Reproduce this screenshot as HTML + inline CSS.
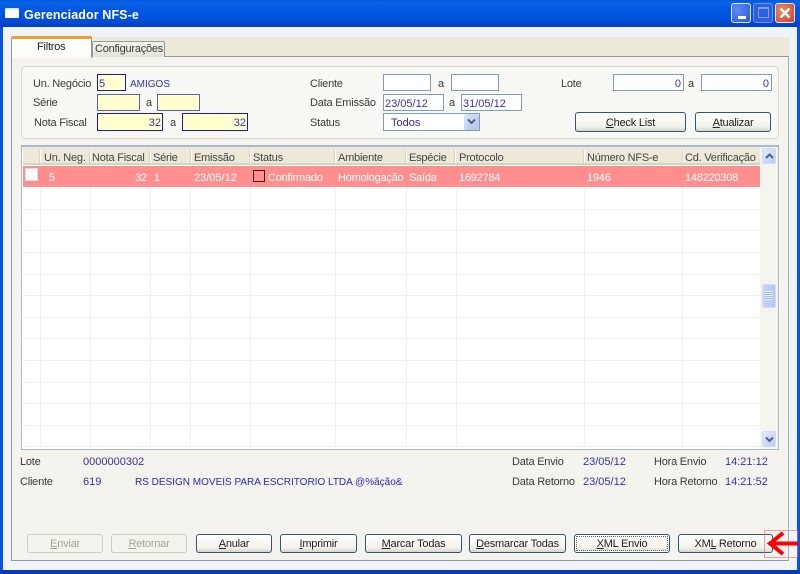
<!DOCTYPE html>
<html><head><meta charset="utf-8"><style>
*{box-sizing:border-box}
html,body{margin:0;padding:0;width:800px;height:574px;overflow:hidden;background:#f1f3fa}
body{position:relative;font:11px/13px "Liberation Sans",sans-serif;letter-spacing:-.22px;color:#333;filter:blur(.35px)}
div,span.a{position:absolute}
.t{white-space:nowrap;height:13px;color:#3a3a3a;margin-top:1px}
.n{letter-spacing:0}
.b{color:#3434a8}
.h{color:#444;top:151px}
.r{color:#fff;top:171px}
.i{background:#ffffcf;border:1px solid #5f5fb0;color:#3434b4;padding:0 1px;line-height:18px;letter-spacing:0;white-space:nowrap}
.d{border-color:#1c1c9c}
.w{background:#fff;border:1px solid #7f9db9;color:#3434b4;padding:0 2px;line-height:18px;letter-spacing:0}
.ra{text-align:right}
.btn{top:534px;height:19px;border:1px solid #30567f;border-radius:3px;background:linear-gradient(#fff,#f3f2ea 75%,#d8d5c6);text-align:center;line-height:19px;color:#222;white-space:nowrap}
.off{border-color:#cfcdbd;background:#f4f3ee;color:#a5a498}
.v{width:1px;background:#f2f0e6;top:166px;height:281px}
.l{height:1px;background:#f2f0e6;left:23px;width:737px}
.hs{background:#fff;border-left:1px solid #d5d2c0;width:2px;top:150px;height:13px}
.sb{left:762px;width:14px;height:16px;border:1px solid #d3dcf3;border-radius:2px;background:linear-gradient(135deg,#e3eafd,#bccbf5)}
.wb{top:3px;width:20px;height:20px;border:1px solid #dfe8ff;border-radius:3px}
</style></head><body>
<div style="left:0;top:0;width:800px;height:27px;background:linear-gradient(#0058d8 0,#0a63ea 10%,#0358e0 30%,#0150db 70%,#0147cc 90%,#0340b4 100%)"></div>
<div style="left:0;top:27px;width:3px;height:547px;background:#0553e0"></div>
<div style="left:797px;top:27px;width:3px;height:547px;background:#0553e0"></div>
<div style="left:0;top:570px;width:800px;height:4px;background:#0a3bb0"></div>
<div style="left:5px;top:8px;width:14px;height:10px;background:#fff;border-top:2px solid #dce6fb;border-radius:1px"></div>
<div class="t" style="left:24px;top:7px;color:#fff;font:bold 12.5px/15px 'Liberation Sans',sans-serif;letter-spacing:.1px">Gerenciador NFS-e</div>
<div class="wb" style="left:731px;background:radial-gradient(circle at 30% 30%,#5d8cf0,#2a5ae0)"><div style="left:6px;top:12px;width:8px;height:3px;background:#fff"></div></div>
<div class="wb" style="left:753px;border-color:#6d93ee;background:#2c60e0"><div style="left:4px;top:3px;width:11px;height:11px;border:1px solid #7ea0ef;border-top-width:2px"></div></div>
<div class="wb" style="left:775px;background:radial-gradient(circle at 35% 35%,#ec8a66,#cf4020)"><svg style="position:absolute;left:3px;top:3px" width="12" height="12"><path d="M1.5 1.5L10.5 10.5M10.5 1.5L1.5 10.5" stroke="#fff" stroke-width="2.4" fill="none"/></svg></div>

<div style="left:11px;top:37px;width:778px;height:20px;background:#ece9d8"></div>
<div style="left:11px;top:56px;width:778px;height:505px;background:#f4f3ee;border:1px solid #919b9c;border-right-color:#a3b2c4"></div>
<div style="left:92px;top:41px;width:73px;height:16px;background:linear-gradient(#f5f4ee,#e4e2d6);border:1px solid #919b9c;border-bottom:0;border-radius:2px 2px 0 0"></div>
<div class="t" style="left:95px;top:42px">Configurações</div>
<div style="left:11px;top:37px;width:81px;height:21px;background:#fdfdfb;border:1px solid #919b9c;border-top:0;border-bottom:0"></div>
<div style="left:11px;top:36px;width:81px;height:3px;background:#f0a028;border-radius:2px 2px 0 0"></div>
<div class="t" style="left:37px;top:40px;color:#222">Filtros</div>

<div style="left:21px;top:66px;width:758px;height:73px;background:#f8f8f5;border:1px solid #dcdacd;border-radius:4px"></div>
<div class="t" style="left:33px;top:77px">Un. Negócio</div>
<div class="t" style="left:33px;top:96px">Série</div>
<div class="t" style="left:34px;top:116px">Nota Fiscal</div>
<div class="i d" style="left:97px;top:74px;width:29px;height:17px">5</div>
<div class="t b" style="left:130px;top:77px;font-size:10px;letter-spacing:0">AMIGOS</div>
<div class="i" style="left:97px;top:94px;width:43px;height:17px"></div>
<div class="t" style="left:146px;top:96px">a</div>
<div class="i" style="left:157px;top:94px;width:43px;height:17px"></div>
<div class="i d ra" style="left:97px;top:113px;width:66px;height:18px">32</div>
<div class="t" style="left:170px;top:116px">a</div>
<div class="i d ra" style="left:182px;top:113px;width:66px;height:18px">32</div>

<div class="t" style="left:310px;top:77px">Cliente</div>
<div class="t" style="left:310px;top:96px">Data Emissão</div>
<div class="t" style="left:310px;top:116px">Status</div>
<div class="w" style="left:383px;top:74px;width:48px;height:17px"></div>
<div class="t" style="left:438px;top:77px">a</div>
<div class="w" style="left:451px;top:74px;width:48px;height:17px"></div>
<div class="w" style="left:383px;top:94px;width:61px;height:17px;padding-left:1px">23/05/12</div>
<div class="t" style="left:449px;top:96px">a</div>
<div class="w" style="left:461px;top:94px;width:61px;height:17px;padding-left:1px">31/05/12</div>
<div class="w" style="left:383px;top:113px;width:97px;height:18px;padding-left:7px;line-height:19px;color:#2c2ca8">Todos</div>
<div style="left:464px;top:114px;width:15px;height:16px;background:linear-gradient(135deg,#dde6fb,#b0c1ec);border-radius:2px"><svg style="position:absolute;left:3px;top:4px" width="9" height="8"><path d="M1 1.5L4.5 5L8 1.5" stroke="#4d6185" stroke-width="2" fill="none"/></svg></div>

<div class="t" style="left:561px;top:77px">Lote</div>
<div class="w ra" style="left:613px;top:74px;width:71px;height:17px">0</div>
<div class="t" style="left:688px;top:77px">a</div>
<div class="w ra" style="left:701px;top:74px;width:71px;height:17px">0</div>
<div class="btn" style="left:575px;top:112px;width:111px;height:20px;line-height:20px"><u>C</u>heck List</div>
<div class="btn" style="left:695px;top:112px;width:76px;height:20px;line-height:20px"><u>A</u>tualizar</div>

<div style="left:21px;top:145px;width:758px;height:305px;background:#fff;border:1px solid #a9bace;border-top-width:2px"></div>
<div style="left:23px;top:147px;width:737px;height:18px;background:#ece9d8;border-bottom:2px solid #d8d5c3"></div>
<div style="left:23px;top:166px;width:737px;height:21px;background:#ff8f8f"></div>

<div class="l" style="top:209px"></div><div class="l" style="top:230px"></div><div class="l" style="top:252px"></div>
<div class="l" style="top:274px"></div><div class="l" style="top:295px"></div><div class="l" style="top:317px"></div>
<div class="l" style="top:338px"></div><div class="l" style="top:360px"></div><div class="l" style="top:382px"></div>
<div class="l" style="top:403px"></div><div class="l" style="top:425px"></div><div class="l" style="top:446px"></div>
<div class="v" style="left:40px;top:187px;height:260px"></div><div class="v" style="left:90px;top:187px;height:260px"></div>
<div class="v" style="left:150px;top:187px;height:260px"></div><div class="v" style="left:190px;top:187px;height:260px"></div>
<div class="v" style="left:250px;top:187px;height:260px"></div><div class="v" style="left:335px;top:187px;height:260px"></div>
<div class="v" style="left:406px;top:187px;height:260px"></div><div class="v" style="left:456px;top:187px;height:260px"></div>
<div class="v" style="left:584px;top:187px;height:260px"></div><div class="v" style="left:682px;top:187px;height:260px"></div>
<div class="hs" style="left:39px"></div><div class="hs" style="left:89px"></div><div class="hs" style="left:149px"></div>
<div class="hs" style="left:190px"></div><div class="hs" style="left:249px"></div><div class="hs" style="left:334px"></div>
<div class="hs" style="left:405px"></div><div class="hs" style="left:454px"></div><div class="hs" style="left:583px"></div>
<div class="hs" style="left:682px"></div>

<div class="t h" style="left:44px">Un. Neg.</div><div class="t h" style="left:92px">Nota Fiscal</div>
<div class="t h" style="left:153px">Série</div><div class="t h" style="left:194px">Emissão</div>
<div class="t h" style="left:253px">Status</div><div class="t h" style="left:338px">Ambiente</div>
<div class="t h" style="left:409px">Espécie</div><div class="t h" style="left:459px">Protocolo</div>
<div class="t h" style="left:587px">Número NFS-e</div><div class="t h" style="left:685px">Cd. Verificação</div>

<div style="left:25px;top:168px;width:13px;height:13px;background:#fff;border:1px solid #e4dcdc"></div>
<div class="t r" style="left:49px">5</div><div class="t r" style="left:135px">32</div><div class="t r" style="left:154px">1</div>
<div class="t r n" style="left:194px">23/05/12</div>
<div style="left:253px;top:170px;width:12px;height:12px;border:1px solid #3a2020"></div>
<div class="t r" style="left:268px">Confirmado</div><div class="t r" style="left:338px">Homologação</div>
<div class="t r" style="left:409px">Saída</div><div class="t r" style="left:459px">1692784</div>
<div class="t r" style="left:587px">1946</div><div class="t r" style="left:685px">148220308</div>

<div style="left:760px;top:147px;width:18px;height:302px;background:#f5f4ef"></div>
<div class="sb" style="top:148px"><svg style="position:absolute;left:2px;top:4px" width="9" height="7"><path d="M1 5L4.5 1.5L8 5" stroke="#4d6185" stroke-width="2" fill="none"/></svg></div>
<div class="sb" style="top:431px"><svg style="position:absolute;left:2px;top:4px" width="9" height="7"><path d="M1 1.5L4.5 5L8 1.5" stroke="#4d6185" stroke-width="2" fill="none"/></svg></div>
<div class="sb" style="top:284px;height:24px;background:linear-gradient(90deg,#c9d5fb,#b6c6f8)"><div style="left:2px;top:6px;width:8px;height:9px;background:repeating-linear-gradient(#e6ecfd 0 1px,#a9bbf0 1px 2px)"></div></div>

<div class="t" style="left:20px;top:455px">Lote</div>
<div class="t b n" style="left:83px;top:455px">0000000302</div>
<div class="t" style="left:20px;top:475px">Cliente</div>
<div class="t b n" style="left:83px;top:475px">619</div>
<div class="t b" style="left:135px;top:475px;color:#2a2ab8;font-size:10px;letter-spacing:0">RS DESIGN MOVEIS PARA ESCRITORIO LTDA @%ãção&amp;</div>
<div class="t" style="left:512px;top:455px">Data Envio</div>
<div class="t b n" style="left:583px;top:455px">23/05/12</div>
<div class="t" style="left:654px;top:455px">Hora Envio</div>
<div class="t b n" style="left:725px;top:455px">14:21:12</div>
<div class="t" style="left:512px;top:475px">Data Retorno</div>
<div class="t b n" style="left:583px;top:475px">23/05/12</div>
<div class="t" style="left:654px;top:475px">Hora Retorno</div>
<div class="t b n" style="left:725px;top:475px">14:21:52</div>

<div class="btn off" style="left:27px;width:76px"><u>E</u>nviar</div>
<div class="btn off" style="left:111px;width:76px"><u>R</u>etornar</div>
<div class="btn" style="left:196px;width:76px"><u>A</u>nular</div>
<div class="btn" style="left:280px;width:77px"><u>I</u>mprimir</div>
<div class="btn" style="left:365px;width:97px"><u>M</u>arcar Todas</div>
<div class="btn" style="left:469px;width:97px"><u>D</u>esmarcar Todas</div>
<div class="btn" style="left:574px;width:96px;box-shadow:inset 0 0 0 1px #fff;outline:1px dotted #666;outline-offset:-3px"><u>X</u>ML Envio</div>
<div class="btn" style="left:678px;width:95px">XM<u>L</u> Retorno</div>

<svg style="position:absolute;left:764px;top:530px" width="36" height="29"><rect x=".5" y=".5" width="33" height="27" fill="none" stroke="#f66" stroke-opacity=".6"/><path d="M34 13.5H6M19 3L6 13.5L19 24" stroke="#f00" stroke-width="4" fill="none"/></svg>
</body></html>
